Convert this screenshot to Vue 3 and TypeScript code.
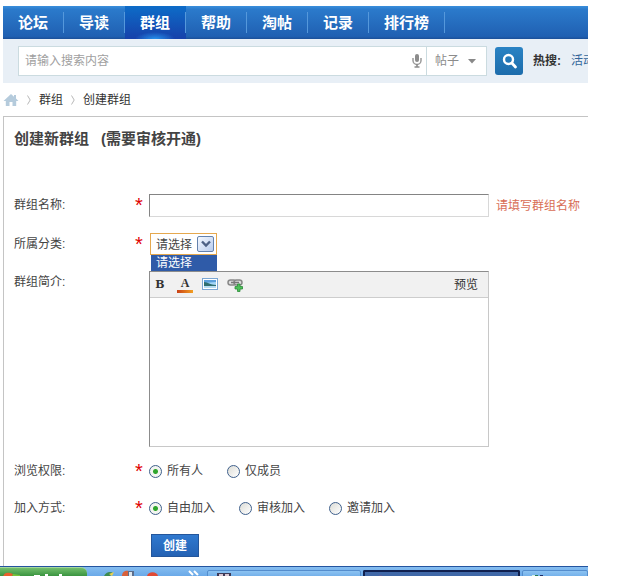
<script setup lang="ts">
import { ref } from 'vue'

interface RadioOption {
  value: string
  label: string
}

const navItems: string[] = ['论坛', '导读', '群组', '帮助', '淘帖', '记录', '排行榜']
const activeNav = ref('群组')

const viewOptions: RadioOption[] = [
  { value: 'all', label: '所有人' },
  { value: 'members', label: '仅成员' },
]
const joinOptions: RadioOption[] = [
  { value: 'free', label: '自由加入' },
  { value: 'review', label: '审核加入' },
  { value: 'invite', label: '邀请加入' },
]

const keyword = ref('')
const groupName = ref('')
const category = ref('请选择')
const intro = ref('')
const viewRight = ref('all')
const joinType = ref('free')
</script>

<template>
  <div class="screen">
    <div class="page">
      <nav class="nav">
        <a
          v-for="item in navItems"
          :key="item"
          href="#"
          class="nav-item"
          :class="{ active: item === activeNav }"
          @click.prevent="activeNav = item"
          >{{ item }}</a
        >
      </nav>

      <form class="search" @submit.prevent>
        <div class="search-box">
          <input v-model="keyword" class="search-input" type="text" placeholder="请输入搜索内容" aria-label="搜索" />
          <svg class="mic" viewBox="0 0 10 14" width="10" height="14" aria-hidden="true">
            <rect x="3" y="0" width="4" height="8" rx="2" fill="#8c8c8c" />
            <path d="M1 4v2.500a4 4 0 0 0 8 0V4" fill="none" stroke="#9a9a9a" stroke-width="1.500" />
            <path d="M5 10v3M2.500 13h5" stroke="#8c8c8c" stroke-width="1.600" />
          </svg>
          <button type="button" class="search-type">
            帖子
            <svg viewBox="0 0 8 5" width="8" height="5" aria-hidden="true"><path d="M0 0h8L4 4.500z" fill="#888" /></svg>
          </button>
        </div>
        <button type="submit" class="search-button" aria-label="搜索">
          <svg viewBox="0 0 28 28" width="28" height="28" aria-hidden="true">
            <circle cx="13.500" cy="12.500" r="4.500" fill="none" stroke="#fff" stroke-width="2.400" />
            <path d="M16.800 16l3.700 4" stroke="#fff" stroke-width="2.800" stroke-linecap="round" />
          </svg>
        </button>
        <strong class="hot">热搜:</strong>
        <a class="hot-link" href="#">活动</a>
      </form>

      <div class="crumbs">
        <a href="#" class="home" aria-label="首页">
          <svg viewBox="0 0 16 14" width="16" height="14" aria-hidden="true">
            <path d="M8 1L0.500 8h2.300v5H6.500V9h3v4h3.700V8h2.300L13 5.500V2h-2v1.700z" fill="#b5cbdc" />
          </svg>
        </a>
        <svg class="arrow" viewBox="0 0 4 10" width="4" height="10" aria-hidden="true"><path d="M0.500 0.500L3.200 5L0.500 9.500" fill="none" stroke="#b8b8b8" /></svg>
        <a href="#">群组</a>
        <svg class="arrow" viewBox="0 0 4 10" width="4" height="10" aria-hidden="true"><path d="M0.500 0.500L3.200 5L0.500 9.500" fill="none" stroke="#b8b8b8" /></svg>
        <a href="#">创建群组</a>
      </div>

      <main class="panel">
        <h1 class="title"><span>创建新群组</span><span>(需要审核开通)</span></h1>
        <form @submit.prevent>
          <div class="fields">
            <div class="row">
              <label for="name">群组名称:</label>
              <span class="star">*</span>
              <div class="control">
                <input id="name" v-model="groupName" class="name-input" type="text" />
                <span class="error">请填写群组名称</span>
              </div>
            </div>
            <div class="row">
              <label for="category">所属分类:</label>
              <span class="star">*</span>
              <div class="control">
                <div class="picker">
                  <select id="category" v-model="category">
                    <option>请选择</option>
                  </select>
                  <span class="picker-arrow">
                    <svg viewBox="0 0 10 8" width="10" height="8" aria-hidden="true"><path d="M1 1.500l4 4l4-4" fill="none" stroke="#4d6185" stroke-width="2.400" /></svg>
                  </span>
                  <div class="picker-menu">请选择</div>
                </div>
              </div>
            </div>
            <div class="row">
              <label for="intro">群组简介:</label>
              <span></span>
              <div class="editor">
                <div class="toolbar">
                  <button type="button" class="tool bold">B</button>
                  <button type="button" class="tool color">A</button>
                  <button type="button" class="tool" aria-label="图片">
                    <svg viewBox="0 0 16 13" width="16" height="13" aria-hidden="true">
                      <rect x="0.500" y="0.500" width="15" height="11" fill="#fff" stroke="#7ba7d4" />
                      <rect x="2" y="2" width="12" height="8" fill="#a5d6f7" />
                      <path d="M2 2h12v2L2 5z" fill="#5a9fdc" />
                      <path d="M2 4c4 0 6 3 12 3v1H2z" fill="#2f6f70" />
                      <path d="M2 8h12v2H2z" fill="#b7dcf2" />
                    </svg>
                  </button>
                  <button type="button" class="tool" aria-label="链接">
                    <svg viewBox="0 0 17 14" width="17" height="14" aria-hidden="true">
                      <rect x="1" y="2" width="8" height="5" rx="2.500" fill="#ddd" stroke="#888" stroke-width="1.500" />
                      <rect x="7" y="2" width="8" height="5" rx="2.500" fill="#ddd" stroke="#888" stroke-width="1.500" />
                      <path d="M4 4.500h8" stroke="#777" stroke-width="1.500" />
                      <path d="M10.500 6h2.500v2.500h2.500v2.500h-2.500v2.500h-2.500v-2.500H8v-2.500h2.500z" fill="#4cc158" stroke="#2b8a38" stroke-width="0.800" />
                    </svg>
                  </button>
                  <button type="button" class="preview">预览</button>
                </div>
                <textarea id="intro" v-model="intro"></textarea>
              </div>
            </div>
          </div>

          <div class="choices">
            <div class="row" role="radiogroup" aria-labelledby="view-label">
              <span id="view-label">浏览权限:</span>
              <span class="star">*</span>
              <div class="control radios">
                <label v-for="o in viewOptions" :key="o.value">
                  <input v-model="viewRight" type="radio" name="view" :value="o.value" />{{ o.label }}
                </label>
              </div>
            </div>
            <div class="row" role="radiogroup" aria-labelledby="join-label">
              <span id="join-label">加入方式:</span>
              <span class="star">*</span>
              <div class="control radios">
                <label v-for="o in joinOptions" :key="o.value">
                  <input v-model="joinType" type="radio" name="join" :value="o.value" />{{ o.label }}
                </label>
              </div>
            </div>
            <div class="row">
              <span></span>
              <span></span>
              <div class="control">
                <button type="submit" class="create">创建</button>
              </div>
            </div>
          </div>
        </form>
      </main>
    </div>

    <footer class="taskbar">
      <div class="start">
        <svg viewBox="0 0 87 9" width="87" height="9" aria-hidden="true">
          <path d="M3 9c1-5 5-5 10-3l-1 3z" fill="#e8602c" />
          <path d="M13 6l7 1v2h-8z" fill="#79c33a" />
          <path d="M34 8h6M45 7h3M59 7h3" stroke="#fff" stroke-width="2" />
        </svg>
      </div>
      <div class="launch">
        <svg viewBox="0 0 120 9" width="120" height="9" aria-hidden="true">
          <path d="M17 9c2-4 6-5 9-3l-3 3z" fill="#3c8a50" />
          <path d="M22 7l5-2-2 4z" fill="#ecd24b" />
          <path d="M35 9c0-5 4-6 7-5v5z" fill="#d8603a" />
          <path d="M41 4h6v5h-6z" fill="#5c6e8c" />
          <path d="M42 5h3v4h-3z" fill="#dce6ee" />
          <path d="M60 9c1-5 10-5 11 0z" fill="#e14a34" />
          <path d="M102 4l4 4M107 4l4 4" stroke="#fff" stroke-width="2" />
        </svg>
      </div>
      <div class="task first">
        <svg viewBox="0 0 16 6" width="16" height="6" aria-hidden="true"><path d="M1 2h14v4H1z" fill="#3d3a58" /><path d="M3 3h4v3H3zM9 3h4v3H9z" fill="#d9c6d2" /></svg>
      </div>
      <div class="task current">
        <svg viewBox="0 0 16 6" width="16" height="6" aria-hidden="true"><path d="M3 6c1-3 8-3 9 0z" fill="#b8477a" /></svg>
      </div>
      <div class="task last">
        <svg viewBox="0 0 16 6" width="16" height="6" aria-hidden="true"><path d="M1 4h3v2H1z" fill="#d8f3e6" /><path d="M4 4h3v2H4z" fill="#277a55" /><path d="M9 4h3v2H9z" fill="#1d2c66" /></svg>
      </div>
    </footer>
  </div>
</template>

<style>
body {
  margin: 0;
  background: #fff;
}
</style>

<style scoped>
.screen {
  padding-right: 52px;
  font: 12px/18px "Liberation Sans", "Noto Sans CJK SC", sans-serif;
  color: #444;
}
.screen * {
  box-sizing: border-box;
}
a {
  color: #333;
  text-decoration: none;
}
button,
input,
select,
textarea {
  margin: 0;
  padding: 0;
  font: inherit;
  color: inherit;
  border: 0;
  border-radius: 0;
  background: none;
  outline: none;
}
svg {
  display: block;
  flex: none;
}
.page {
  padding: 6px 0 0 3px;
}
.nav {
  display: flex;
  height: 33px;
  background: linear-gradient(#3a8fdc, #2b7acb 10%, #2060b2 92%, #1b4f98);
}
.nav-item {
  padding: 0 15px;
  font-size: 15px;
  font-weight: bold;
  line-height: 34px;
  color: #fff;
  border-right: 1px solid;
  border-image: linear-gradient(transparent 20%, #5598db 20%, #5598db 80%, transparent 80%) 1;
}
.nav-item.active {
  background: radial-gradient(ellipse 20px 7px at 50% 100%, #2791ec 0, transparent 100%), linear-gradient(#0d6cc8, #1741aa);
}
.search {
  display: flex;
  align-items: center;
  height: 44px;
  padding-left: 15px;
  overflow: hidden;
  white-space: nowrap;
  background: #e8eff6;
}
.search-box {
  display: flex;
  align-items: center;
  flex: 1 1 auto;
  min-width: 0;
  height: 30px;
  background: #fff;
  border: 1px solid #cbdbe0;
}
.search-input {
  flex: 1;
  min-width: 0;
  height: 28px;
  padding-left: 6px;
}
.search-input::placeholder {
  color: #a0a0a0;
  opacity: 1;
}
.mic {
  margin: 0 4px;
}
.search-type {
  display: flex;
  align-items: center;
  gap: 9px;
  height: 28px;
  padding: 0 10px 0 8px;
  color: #8b8b8b;
  border-left: 1px solid #cbdbe0;
}
.search-button {
  flex: none;
  margin: 0 10px 0 8px;
  border-radius: 3px;
  background: linear-gradient(#2a83c4, #1c6cab);
}
.hot {
  color: #333;
}
.hot-link {
  width: 17px;
  margin-left: 10px;
  overflow: hidden;
  color: #336699;
}
.crumbs {
  display: flex;
  align-items: center;
  height: 33px;
}
.home {
  margin-right: 8px;
}
.arrow {
  margin-right: 8px;
}
.crumbs .arrow + a {
  margin-right: 8px;
}
.panel {
  padding: 0 0 9px 10px;
  border: solid #c4c4c4;
  border-width: 1px 0 0 1px;
}
.title {
  display: flex;
  gap: 12px;
  margin: 0 0 33px;
  font-size: 15px;
  line-height: 44px;
}
.fields {
  display: flex;
  flex-direction: column;
  gap: 16px;
}
.choices {
  display: flex;
  flex-direction: column;
  gap: 15px;
  padding-top: 13px;
}
.row {
  display: grid;
  grid-template-columns: 121px 14px 1fr;
  line-height: 22px;
}
.star {
  height: 22px;
  font-size: 20px;
  color: #e00000;
}
.control {
  display: flex;
  align-items: center;
  min-width: 0;
  white-space: nowrap;
}
.name-input {
  flex: 0 1 340px;
  min-width: 0;
  height: 23px;
  padding: 0 4px;
  border: 1px solid;
  border-color: #848484 #d8d8d8 #d8d8d8 #848484;
}
.error {
  margin-left: 7px;
  color: #d86d55;
}
.picker {
  position: relative;
  margin-left: 1px;
}
.picker select {
  display: block;
  appearance: none;
  width: 67px;
  height: 22px;
  padding-left: 5px;
  border: 1px solid #e5a84e;
  background: #fff;
}
.picker-arrow {
  position: absolute;
  top: 3px;
  right: 3px;
  display: grid;
  place-items: center;
  width: 17px;
  height: 16px;
  pointer-events: none;
  border: 1px solid #6482ad;
  border-radius: 2px;
  background: linear-gradient(135deg, #f4f8ff, #b9cdee);
}
.picker-menu {
  position: absolute;
  top: 22px;
  left: 1px;
  right: 0;
  padding-left: 5px;
  line-height: 16px;
  color: #fff;
  background: #2f5ba8;
}
.editor {
  max-width: 340px;
  border: 1px solid;
  border-color: #8c8c8c #c8c8c8 #c8c8c8 #8c8c8c;
}
.toolbar {
  display: flex;
  align-items: center;
  gap: 9px;
  height: 26px;
  padding: 0 10px 0 2px;
  background: #f1f1f1;
  border-bottom: 1px solid #cdcdcd;
}
.tool {
  display: grid;
  place-items: center;
  width: 16px;
  height: 16px;
  line-height: 14px;
  font-family: "DejaVu Serif", serif;
  font-size: 11px;
  font-weight: bold;
  color: #333;
}
.color {
  font-family: "Liberation Serif", serif;
  font-size: 12px;
  line-height: 12px;
  border-bottom: 3px solid;
  border-image: linear-gradient(90deg, #c63a16, #f5a623) 1;
}
.preview {
  margin-left: auto;
  color: #333;
}
.editor textarea {
  display: block;
  width: 100%;
  height: 148px;
  padding: 4px;
  resize: none;
}
.radios {
  gap: 24px;
}
.radios label {
  display: flex;
  align-items: center;
  gap: 5px;
}
.radios input {
  appearance: none;
  width: 13px;
  height: 13px;
  border: 1px solid #3f608c;
  border-radius: 50%;
  background: linear-gradient(135deg, #dcdcd6, #fff);
}
.radios input:checked {
  background: radial-gradient(circle, #2fa52c 0, #2fa52c 2px, #f3f5f0 3px);
}
.create {
  width: 48px;
  height: 23px;
  margin-left: 2px;
  font-weight: bold;
  color: #fff;
  border: 1px solid #24569b;
  background: linear-gradient(#3079cf, #2462b4);
}
.taskbar {
  display: flex;
  height: 10px;
  overflow: hidden;
  background: linear-gradient(#85bdf0, #6aa9e8);
  border-top: 1px solid #24549f;
}
.start {
  flex: none;
  border-radius: 0 6px 0 0;
  border-top: 1px solid #a4d69c;
  background: linear-gradient(#72be6b, #3a9440);
}
.launch {
  flex: none;
}
.task {
  height: 10px;
  margin-top: 3px;
  padding-left: 8px;
  border: 1px solid #548dcd;
  border-radius: 2px 2px 0 0;
  background: linear-gradient(#8cc3f2, #66a6e5);
}
.first {
  flex: 157;
}
.current {
  flex: 158;
  margin-left: 2px;
  border: 2px solid #10204f;
  border-bottom: 0;
  background: #4068a8;
}
.last {
  flex: 61;
  margin-left: 2px;
}
</style>
